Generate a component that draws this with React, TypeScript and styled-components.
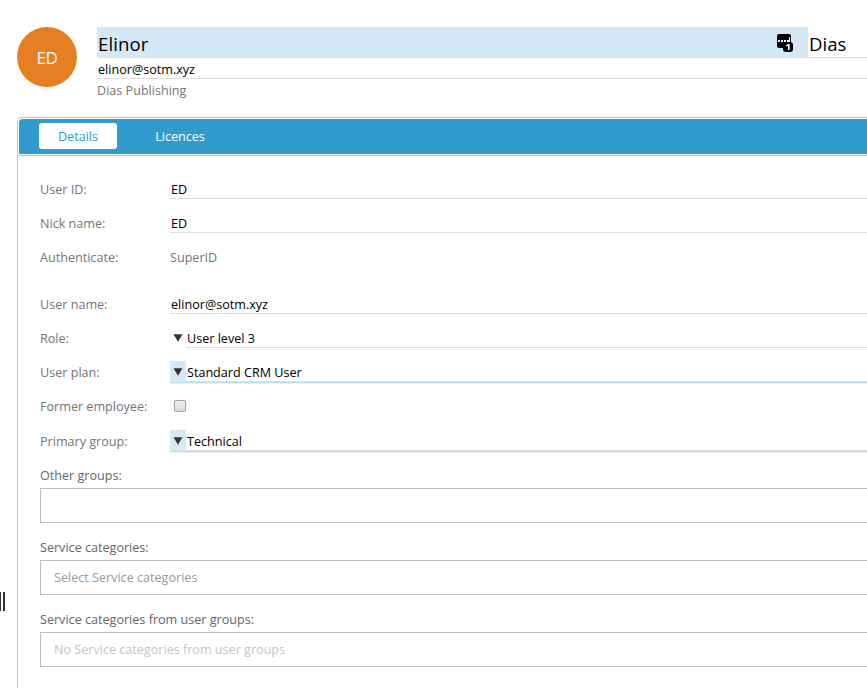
import React from "react";
import styled, { createGlobalStyle, css } from "styled-components";

const GlobalStyle = createGlobalStyle`
  * { box-sizing: border-box; }
  html, body { margin: 0; background: #fff; overflow: hidden; }
  body { font-family: "Open Sans", "Noto Sans", sans-serif; font-size: 12.6px; color: #000; }
`;

const Page = styled.div`
  display: flex;
  width: 867px;
  height: 688px;
  overflow: hidden;
`;

const Splitter = styled.div`
  flex: none;
  width: 17px;
  padding-top: 592px;
`;

const Grip = styled.div`
  width: 5px;
  height: 19px;
  border: solid #333;
  border-width: 0 2px 0 1px;
`;

const Main = styled.main`
  display: flex;
  flex-direction: column;
  flex: 1;
  min-width: 0;
  padding-top: 27px;
`;

const Header = styled.header`
  display: flex;
  gap: 20px;
  height: 90px;
`;

const Avatar = styled.div`
  flex: none;
  width: 60px;
  height: 60px;
  border-radius: 50%;
  background: #e67e22;
  color: #fff;
  font-size: 17px;
  line-height: 61px;
  letter-spacing: -0.3px;
  text-align: center;
`;

const Identity = styled.div`
  flex: 1;
  min-width: 0;
`;

const NameRow = styled.div`
  display: flex;
  height: 31px;
  font-size: 18.6px;
  line-height: 34px;
`;

const FirstName = styled.div`
  display: flex;
  justify-content: space-between;
  width: 711px;
  padding: 0 14px 0 1px;
  background: #d5e8f6;
  letter-spacing: 0.1px;
`;

const LastName = styled.div`
  flex: 1;
  border-bottom: 1px solid #dedede;
  padding-left: 1px;
`;

const PasswordIcon = styled.svg`
  width: 18px;
  height: 20px;
  margin-top: 6px;
`;

const Email = styled.div`
  height: 21px;
  padding-left: 1px;
  border-bottom: 1px solid #dedede;
  line-height: 24px;
`;

const Company = styled.div`
  line-height: 24px;
  color: #757575;
`;

const Panel = styled.section`
  flex: 1;
  border: solid #c0c0c0;
  border-width: 1px 0 0 1px;
  border-top-left-radius: 5px;
`;

const TabStrip = styled.div`
  height: 38px;
  padding: 1px 0 1px 1px;
  border-bottom: 1px solid #c0c0c0;
`;

const TabBar = styled.nav`
  display: flex;
  gap: 24px;
  height: 35px;
  padding: 4px 0 0 20px;
  background: #319bd0;
  border-top-left-radius: 4px;
`;

const Tab = styled.button<{ $active?: boolean }>`
  width: 78px;
  height: 26px;
  padding: 0;
  border: 0;
  border-radius: 3px;
  font: inherit;
  line-height: 28px;
  background: ${(p) => (p.$active ? "#fff" : "transparent")};
  color: ${(p) => (p.$active ? "#319bd0" : "#fff")};
`;

const Form = styled.div`
  padding: 16px 0 0 22px;
`;

const Row = styled.div<{ $gapAfter?: number }>`
  display: flex;
  height: 34px;
  margin-bottom: ${(p) => p.$gapAfter ?? 0}px;
`;

const Label = styled.label`
  flex: none;
  width: 130px;
  line-height: 36px;
  color: #757575;
`;

const ReadOnly = styled.div`
  line-height: 36px;
  color: #757575;
`;

const Input = styled.div`
  flex: 1;
  height: 21px;
  margin-top: 6px;
  padding-left: 1px;
  border-bottom: 1px solid #dedede;
  line-height: 24px;
`;

const Select = styled.div<{ $required?: boolean }>`
  display: flex;
  flex: 1;
  height: 21px;
  margin-top: 6px;
  ${(p) =>
    p.$required &&
    css`
      box-shadow: 0 1px 0 #b4e1ee, 0 2px 0 #e2f3f8;
    `}
`;

const ArrowCell = styled.span<{ $required?: boolean }>`
  display: flex;
  align-items: center;
  justify-content: center;
  width: 16px;
  padding-top: 1px;
  background: ${(p) => (p.$required ? "#d5e8f6" : "transparent")};
`;

const SelectValue = styled.span`
  flex: 1;
  padding-left: 1px;
  border-bottom: 1px solid #dedede;
  line-height: 24px;
`;

const Checkbox = styled.span`
  width: 12px;
  height: 12px;
  margin: 11px 0 0 4px;
  border: 1px solid #a3a3a3;
  border-radius: 2px;
  background: linear-gradient(#ececec, #dcdcdc);
`;

const ListGroup = styled.div`
  height: 72px;
  color: #666;

  &:first-of-type {
    margin-top: -7px;
  }
`;

const Lists = styled.div``;

const ListLabel = styled.div`
  height: 37px;
  padding-top: 7px;
  line-height: 36px;
`;

const ListBox = styled.div<{ $disabled?: boolean }>`
  height: 35px;
  padding-left: 13px;
  border: solid #bdbdbd;
  border-width: 1px 0 1px 1px;
  line-height: 34px;
  color: ${(p) => (p.$disabled ? "#c4c4c4" : "#999")};
`;

function Dropdown({ value, required }: { value: string; required?: boolean }) {
  return (
    <Select $required={required}>
      <ArrowCell $required={required}>
        <svg width="10" height="8" viewBox="0 0 10 8">
          <path d="M0.5 0.3H9.5L5 7.7Z" fill="#333" />
        </svg>
      </ArrowCell>
      <SelectValue>{value}</SelectValue>
    </Select>
  );
}

export default function App() {
  return (
    <Page>
      <GlobalStyle />
      <Splitter>
        <Grip />
      </Splitter>
      <Main>
        <Header>
          <Avatar>ED</Avatar>
          <Identity>
            <NameRow>
              <FirstName>
                Elinor
                <PasswordIcon viewBox="0 0 18 20">
                  <rect x="1" y="1" width="14" height="14" rx="2" fill="#000" />
                  <path d="M2 7h2v2H2zM5 7h2v2H5zM8 7h2v2H8zM11 7h2v2h-2zM13 4h1v5h-1z" fill="#fff" />
                  <rect x="7" y="9" width="10" height="10" rx="3" fill="#000" />
                  <path d="M10 12.4L12 11h1.6v6H12v-4.2l-1.6 1z" fill="#fff" />
                </PasswordIcon>
              </FirstName>
              <LastName>Dias</LastName>
            </NameRow>
            <Email>elinor@sotm.xyz</Email>
            <Company>Dias Publishing</Company>
          </Identity>
        </Header>
        <Panel>
          <TabStrip>
            <TabBar>
              <Tab $active>Details</Tab>
              <Tab>Licences</Tab>
            </TabBar>
          </TabStrip>
          <Form>
            <Row>
              <Label>User ID:</Label>
              <Input>ED</Input>
            </Row>
            <Row>
              <Label>Nick name:</Label>
              <Input>ED</Input>
            </Row>
            <Row $gapAfter={13}>
              <Label>Authenticate:</Label>
              <ReadOnly>SuperID</ReadOnly>
            </Row>
            <Row>
              <Label>User name:</Label>
              <Input>elinor@sotm.xyz</Input>
            </Row>
            <Row>
              <Label>Role:</Label>
              <Dropdown value="User level 3" />
            </Row>
            <Row>
              <Label>User plan:</Label>
              <Dropdown value="Standard CRM User" required />
            </Row>
            <Row $gapAfter={1}>
              <Label>Former employee:</Label>
              <Checkbox />
            </Row>
            <Row>
              <Label>Primary group:</Label>
              <Dropdown value="Technical" required />
            </Row>
            <Lists>
              <ListGroup>
                <ListLabel>Other groups:</ListLabel>
                <ListBox />
              </ListGroup>
              <ListGroup>
                <ListLabel>Service categories:</ListLabel>
                <ListBox>Select Service categories</ListBox>
              </ListGroup>
              <ListGroup>
                <ListLabel>Service categories from user groups:</ListLabel>
                <ListBox $disabled>No Service categories from user groups</ListBox>
              </ListGroup>
            </Lists>
          </Form>
        </Panel>
      </Main>
    </Page>
  );
}
